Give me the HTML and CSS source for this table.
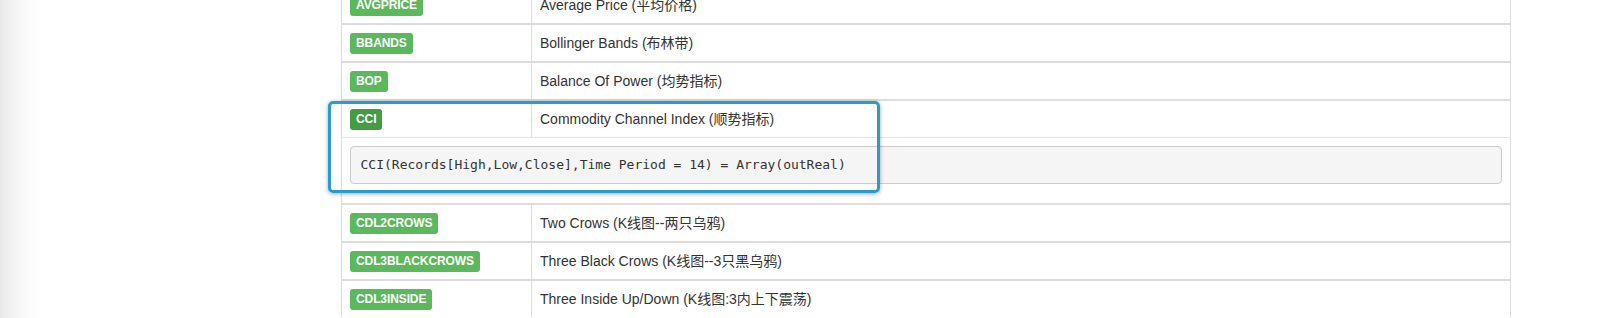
FILE: index.html
```html
<!DOCTYPE html>
<html lang="en">
<head>
<meta charset="utf-8">
<title>Indicators</title>
<link rel="stylesheet" href="styles.css">
</head>
<body>
<div class="page">
  <table class="fn-table">
    <tbody>
      <tr>
        <td class="name"><span class="tag">AVGPRICE</span></td>
        <td class="desc">Average Price (平均价格)</td>
      </tr>
      <tr>
        <td class="name"><span class="tag">BBANDS</span></td>
        <td class="desc">Bollinger Bands (布林带)</td>
      </tr>
      <tr>
        <td class="name"><span class="tag">BOP</span></td>
        <td class="desc">Balance Of Power (均势指标)</td>
      </tr>
      <tr>
        <td class="name"><span class="tag tag-active">CCI</span></td>
        <td class="desc">Commodity Channel Index (顺势指标)</td>
      </tr>
      <tr class="detail">
        <td colspan="2"><pre class="sig">CCI(Records[High,Low,Close],Time Period = 14) = Array(outReal)</pre></td>
      </tr>
      <tr>
        <td class="name"><span class="tag">CDL2CROWS</span></td>
        <td class="desc">Two Crows (K线图--两只乌鸦)</td>
      </tr>
      <tr>
        <td class="name"><span class="tag">CDL3BLACKCROWS</span></td>
        <td class="desc">Three Black Crows (K线图--3只黑乌鸦)</td>
      </tr>
      <tr>
        <td class="name"><span class="tag">CDL3INSIDE</span></td>
        <td class="desc">Three Inside Up/Down (K线图:3内上下震荡)</td>
      </tr>
    </tbody>
  </table>
  <div class="highlight"></div>
</div>
</body>
</html>
```

FILE: styles.css
```css
html, body {
  margin: 0;
  padding: 0;
}

body {
  width: 1604px;
  height: 318px;
  overflow: hidden;
  background: linear-gradient(to right, #e9e9e9 0px, #f3f3f3 12px, #fbfbfb 28px, #ffffff 42px);
  font-family: "Liberation Sans", "Noto Sans CJK SC", Arial, sans-serif;
  color: #333333;
}

.page {
  position: relative;
  display: flow-root;
  height: 318px;
}

.fn-table {
  border-collapse: separate;
  border-spacing: 0;
  table-layout: fixed;
  width: 1170px;
  margin: -15px 0 0 341px;
}

.fn-table td {
  border-top: 2px solid #dddddd;
  padding: 7px 8px;
  line-height: 22px;
  font-size: 14px;
  vertical-align: top;
  background: #ffffff;
}

.fn-table td.name {
  width: 173px;
  border-left: 1px solid #dddddd;
}

.fn-table td.desc {
  width: 962px;
  border-left: 1px solid #dddddd;
  border-right: 1px solid #dddddd;
}

.fn-table tr.detail td {
  border-top: 1px solid #e6e6e6;
  border-left: 1px solid #dddddd;
  border-right: 1px solid #dddddd;
  padding: 8px 8px 9px;
  line-height: 18px;
}

.tag {
  display: inline-block;
  vertical-align: top;
  margin-top: 1px;
  padding: 4px 6px 5px;
  font-size: 12px;
  line-height: 12px;
  font-weight: bold;
  color: #ffffff;
  background: #5cb85c;
  border-radius: 3px;
  letter-spacing: -0.1px;
}

.tag-active {
  background: #449d44;
}

.sig {
  margin: 0 0 10px;
  padding: 9px 9.5px;
  font-family: "DejaVu Sans Mono", "Liberation Mono", monospace;
  font-size: 13px;
  line-height: 18px;
  color: #333333;
  background: #f5f5f5;
  border: 1px solid #cccccc;
  border-radius: 4px;
  white-space: pre;
}

.highlight {
  position: absolute;
  left: 328px;
  top: 101px;
  width: 546px;
  height: 86px;
  border: 3px solid #2a9bcd;
  border-radius: 5px;
  box-shadow: 0 1px 4px rgba(0, 0, 0, 0.35);
}
```
